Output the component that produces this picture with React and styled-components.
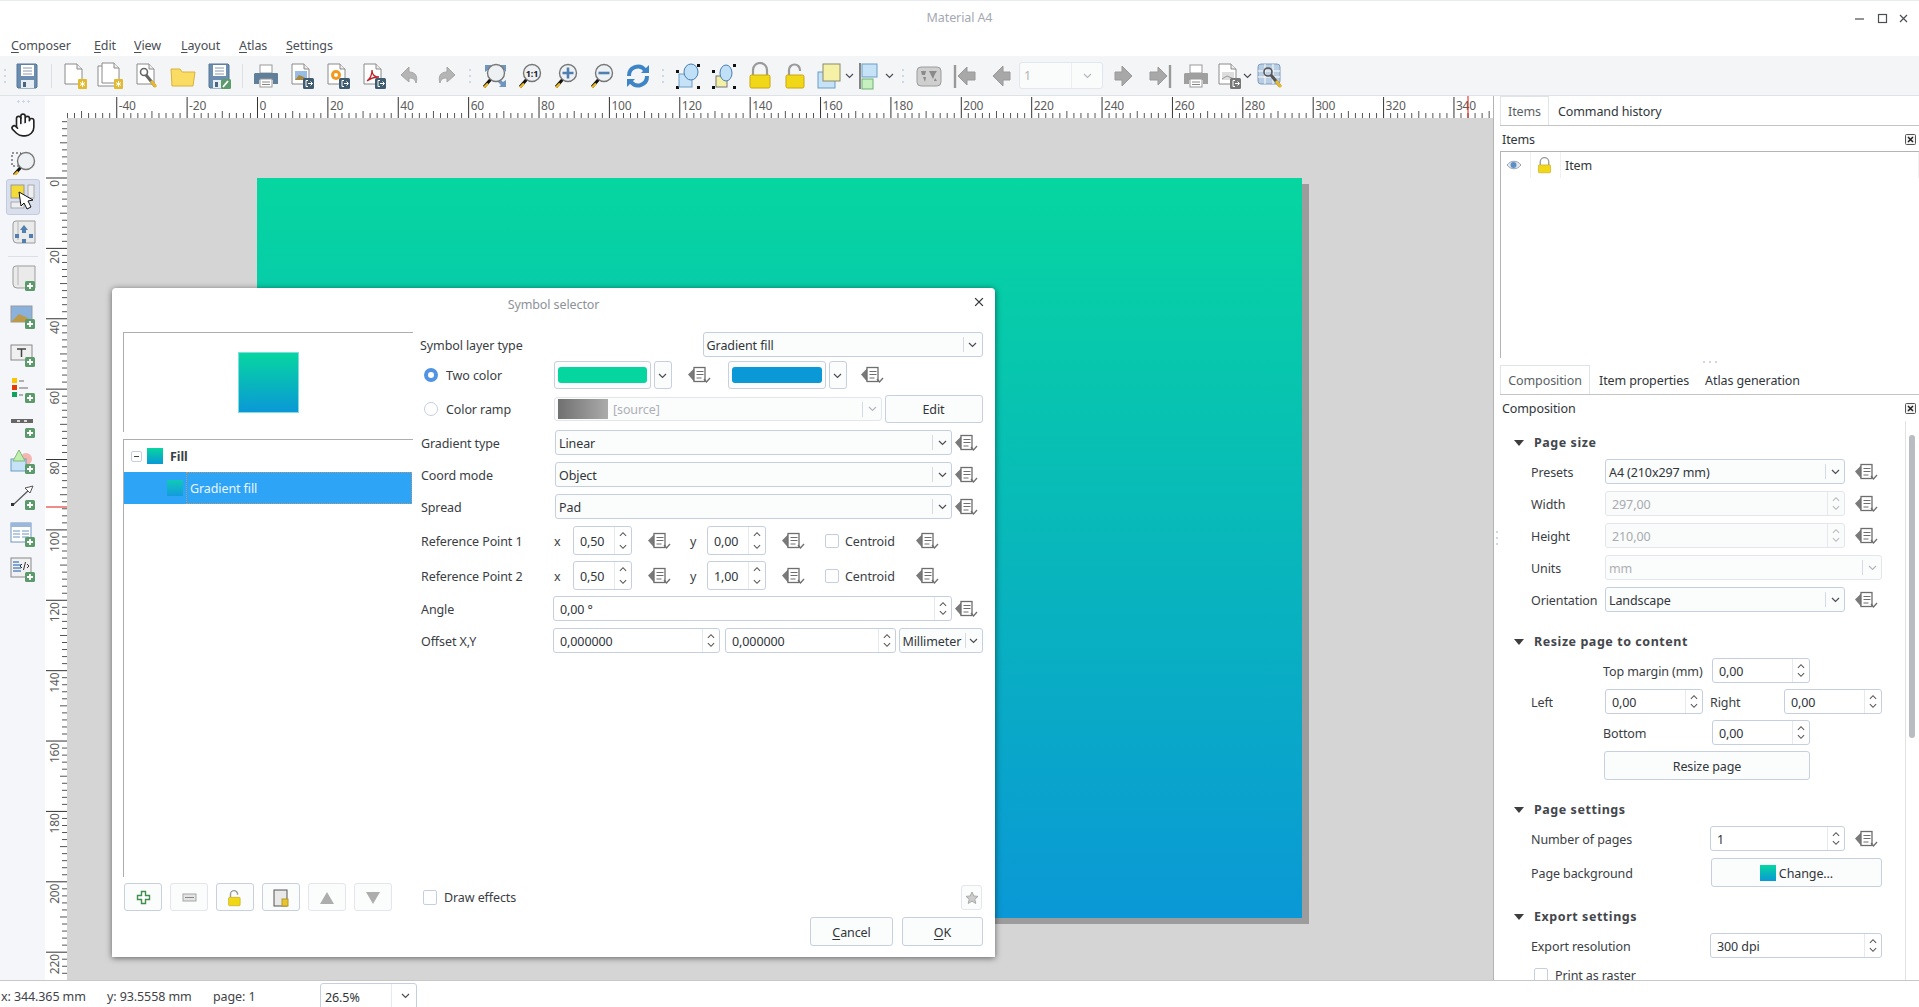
import React from "react";
import styled, { createGlobalStyle } from "styled-components";
import { Hand } from "lucide-react";

const Global = createGlobalStyle`
  html, body { margin:0; padding:0; background:#fff; }
  body { font-family:"Noto Sans", sans-serif; font-size:12.5px; letter-spacing:-0.1px; color:#31363b; }
`;

const Window = styled.div`
  position:relative;
  width:1919px;
  height:1007px;
  overflow:hidden;
  display:flex;
  flex-direction:column;
  background:#fff;
`;

const TitleBar = styled.div`
  height:34px;
  flex:none;
  border-top:1px solid #e8ebf0;
  display:flex;
  align-items:center;
  justify-content:flex-end;
  position:relative;
  padding-right:11px;
  gap:10px;
`;
const TitleText = styled.div`
  position:absolute;
  left:0;
  right:0;
  top:8px;
  text-align:center;
  color:#a5a9b4;
`;

const MenuBar = styled.div`
  height:21px;
  flex:none;
  display:flex;
  align-items:center;
  padding-left:11px;
  background:#fff;
`;
const MenuItem = styled.span`
  width:${(p) => p.$w}px;
  color:#4a4e55;
  u { text-underline-offset:2px; }
`;

const MainBar = styled.div`
  height:40px;
  flex:none;
  box-sizing:border-box;
  background:#f4f5f7;
  border-bottom:1px solid #dfe2e7;
  display:flex;
  align-items:center;
`;
const ToolBtn = styled.div`
  width:${(p) => p.$w || 36}px;
  flex:none;
  display:flex;
  align-items:center;
  justify-content:center;
`;
const Sep = styled.div`
  width:${(p) => p.$w}px;
  height:24px;
  flex:none;
  display:flex;
  justify-content:center;
  &::before { content:""; width:1px; background:#dcdfe4; }
`;
const Spacer = styled.div`
  width:${(p) => p.$w}px;
  flex:none;
`;
const Grip = styled.div`
  width:${(p) => p.$w}px;
  flex:none;
  display:flex;
  justify-content:center;
  &::before { content:""; width:2px; height:14px;
    background:repeating-linear-gradient(#cfd6e6 0 2px, transparent 2px 6px); }
`;
const PageCombo = styled.div`
  width:84px;
  height:27px;
  flex:none;
  box-sizing:border-box;
  border:1px solid #e2e6ee;
  border-radius:3px;
  background:#fafbfb;
  display:flex;
  align-items:center;
  color:#b3b5b8;
`;
const PageValue = styled.div`
  flex:1;
  padding-left:4px;
`;
const PageArrow = styled.div`
  width:30px;
  height:100%;
  border-left:1px solid #eceef2;
  display:flex;
  align-items:center;
  justify-content:center;
`;

const Body = styled.div`
  flex:1;
  min-height:0;
  display:flex;
`;
const LeftBar = styled.div`
  width:45px;
  flex:none;
  background:#f4f6fa;
  display:flex;
  flex-direction:column;
  align-items:center;
  padding-top:1px;
`;
const LeftGrip = styled.div`
  height:10px;
  width:14px;
  flex:none;
  background:radial-gradient(circle, #cfd6e6 1px, transparent 1.2px) 0 2px / 5px 5px repeat-x;
`;
const LeftBtn = styled.div`
  width:34px;
  height:${(p) => p.$h}px;
  flex:none;
  box-sizing:border-box;
  display:flex;
  align-items:center;
  justify-content:center;
  border-radius:3px;
  ${(p) => p.$active && "background:#d9dfec; border:1px solid #c3cbde;"}
`;
const LeftSep = styled.div`
  width:30px;
  height:1px;
  background:#dcdfe6;
  margin:6px 0 3px;
  flex:none;
`;

const Workspace = styled.div`
  width:1448px;
  flex:none;
  display:flex;
  flex-direction:column;
  min-height:0;
`;
const RulerRow = styled.div`
  height:22px;
  flex:none;
  display:flex;
  background:#fff;
`;
const Corner = styled.div`
  width:22px;
  flex:none;
`;
const CanvasRow = styled.div`
  flex:1;
  min-height:0;
  display:flex;
`;
const Canvas = styled.div`
  flex:1;
  background:#d5d5d5;
  overflow:hidden;
  padding:60px 0 0 190px;
`;
const Page = styled.div`
  width:1045px;
  height:740px;
  background:linear-gradient(#06d6a0, #0a98d6);
  box-shadow:7px 6px 0 #9c9c9c;
`;
const RulerSvg = styled.svg`
  display:block;
  flex:none;
  font-family:"Noto Sans", sans-serif;
  font-size:12px;
  letter-spacing:-0.2px;
  fill:#5d5d5d;
`;

const RightPanel = styled.div`
  width:426px;
  flex:none;
  box-sizing:border-box;
  border-left:1px solid #b4b4b4;
  padding-left:6px;
  display:flex;
  flex-direction:column;
  min-height:0;
`;
const TabRow = styled.div`
  height:30px;
  flex:none;
  box-sizing:border-box;
  display:flex;
  border-bottom:1px solid #c4c4c4;
`;
const Tab = styled.div`
  height:29px;
  box-sizing:border-box;
  padding:2px 8px 0;
  display:flex;
  align-items:center;
  justify-content:center;
  ${(p) => p.$w && `width:${p.$w}px; margin-right:1px;`}
  ${(p) => p.$active && "border:1px solid #dfe3ea; border-bottom:none; color:#5a5f66; padding-top:0;"}
`;
const DockHead = styled.div`
  height:${(p) => p.$h}px;
  flex:none;
  box-sizing:border-box;
  display:flex;
  align-items:center;
  justify-content:space-between;
  padding:${(p) => p.$pt || 0}px 3px 0 2px;
`;
const ItemList = styled.div`
  height:207px;
  flex:none;
  box-sizing:border-box;
  border-top:1px solid #b4b4b4;
  border-left:1px solid #b4b4b4;
`;
const ItemRow = styled.div`
  height:26px;
  display:flex;
`;
const ItemCell = styled.div`
  width:${(p) => p.$w}px;
  flex:${(p) => (p.$w ? "none" : 1)};
  box-sizing:border-box;
  display:flex;
  align-items:center;
  justify-content:${(p) => (p.$w ? "center" : "flex-start")};
  padding:0 ${(p) => p.$pr || 0}px 0 ${(p) => (p.$w ? 0 : 4)}px;
  border-right:1px solid #f0f0f0;
`;
const Splitter = styled.div`
  height:7px;
  flex:none;
  display:flex;
  justify-content:center;
  align-items:center;
  &::before { content:""; width:14px; height:2px;
    background:repeating-linear-gradient(90deg,#cfd6e6 0 2px, transparent 2px 6px); }
`;
const ScrollWrap = styled.div`
  flex:1;
  min-height:0;
  display:flex;
  overflow:hidden;
`;
const ScrollBody = styled.div`
  width:405px;
  flex:none;
  padding-top:11px;
`;
const ScrollTrack = styled.div`
  width:14px;
  flex:none;
  box-sizing:border-box;
  border-left:1px solid #e2e2e2;
  padding:14px 0 0 3px;
`;
const ScrollThumb = styled.div`
  width:6px;
  height:303px;
  border-radius:3px;
  background:#b9bcc2;
`;
const DragDots = styled.div`
  position:absolute;
  left:1496px;
  top:531px;
  width:2px;
  height:14px;
  background:repeating-linear-gradient(#cfd6e6 0 2px, transparent 2px 6px);
`;

const Section = styled.div`
  height:20px;
  display:flex;
  align-items:center;
  padding-left:14px;
  margin-bottom:${(p) => p.$mb}px;
  font-weight:700;
  letter-spacing:0.55px;
  color:#43464c;
`;
const Tri = styled.span`
  width:0;
  height:0;
  margin:2px 10px 0 0;
  border-left:5px solid transparent;
  border-right:5px solid transparent;
  border-top:6px solid #3d3d3d;
`;
const Row = styled.div`
  height:${(p) => p.$h || 25}px;
  flex:none;
  display:flex;
  align-items:center;
  margin-bottom:${(p) => p.$mb || 0}px;
  margin-left:${(p) => p.$ml || 0}px;
`;
const Lbl = styled.div`
  width:${(p) => p.$w}px;
  flex:none;
  margin-left:${(p) => p.$ml || 0}px;
  padding-top:1px;
  white-space:nowrap;
  color:${(p) => p.$c || "#3a3e44"};
`;

const ComboBox = styled.div`
  width:${(p) => p.$w}px;
  height:${(p) => p.$h || 25}px;
  flex:none;
  box-sizing:border-box;
  margin-left:${(p) => p.$ml || 0}px;
  border:1px solid ${(p) => (p.$off ? "#e3e6ec" : "#c6cfe0")};
  border-radius:3px;
  background:#fbfcfc;
  display:flex;
  align-items:center;
  color:${(p) => (p.$off ? "#aeb0b4" : "#31363b")};
`;
const ComboText = styled.div`
  flex:1;
  min-width:0;
  padding:1px 0 0 3px;
  display:flex;
  align-items:center;
  gap:5px;
  white-space:nowrap;
`;
const ComboArrow = styled.div`
  width:${(p) => p.$w || 18}px;
  height:15px;
  flex:none;
  border-left:1px solid #d5dae3;
  display:flex;
  align-items:center;
  justify-content:center;
`;
const RampSwatch = styled.span`
  width:50px;
  height:20px;
  margin-top:-1px;
  background:linear-gradient(90deg,#707070,#ababab);
`;

const SpinBox = styled.div`
  width:${(p) => p.$w}px;
  height:${(p) => p.$h || 25}px;
  flex:none;
  box-sizing:border-box;
  margin-left:${(p) => p.$ml || 0}px;
  border:1px solid ${(p) => (p.$off ? "#e3e6ec" : "#c6cfe0")};
  border-radius:3px;
  background:${(p) => (p.$off ? "#fafbfb" : "#fff")};
  display:flex;
  align-items:center;
  color:${(p) => (p.$off ? "#a8abaf" : "#31363b")};
`;
const SpinText = styled.div`
  flex:1;
  padding:1px 0 0 ${(p) => p.$pl || 6}px;
  white-space:nowrap;
`;
const Stepper = styled.div`
  width:17px;
  height:100%;
  flex:none;
  box-sizing:border-box;
  padding:4px 0;
  border-left:1px solid #e6e9ef;
  display:flex;
  flex-direction:column;
  align-items:center;
  justify-content:space-between;
`;

const Btn = styled.div`
  width:${(p) => p.$w}px;
  height:${(p) => p.$h || 29}px;
  flex:none;
  box-sizing:border-box;
  margin-left:${(p) => p.$ml || 0}px;
  padding-top:1px;
  border:1px solid ${(p) => (p.$off ? "#e3e6ec" : "#c8d0e0")};
  border-radius:3px;
  background:#fbfcfc;
  display:flex;
  align-items:center;
  justify-content:center;
  gap:3px;
  u { text-underline-offset:2px; }
`;
const ColorBtn = styled(Btn)`
  padding:0 3px;
`;
const ColorFill = styled.div`
  width:100%;
  height:16px;
  border-radius:3px;
  background:${(p) => p.$c};
`;
const ArrowBtn = styled(Btn)`
  width:18px;
`;
const Check = styled.span`
  width:14px;
  height:14px;
  flex:none;
  box-sizing:border-box;
  display:block;
  margin-left:${(p) => p.$ml || 0}px;
  border:1px solid #c6cfe0;
  border-radius:2px;
  background:#fff;
`;
const Radio = styled.span`
  width:14px;
  height:14px;
  flex:none;
  box-sizing:border-box;
  display:block;
  margin-left:4px;
  border-radius:50%;
  ${(p) => (p.$on
    ? "border:4px solid #5294e2; background:#fff;"
    : "border:1px solid #c6cfe0; background:#fff;")}
`;
const Swatch = styled.span`
  width:16px;
  height:16px;
  flex:none;
  display:block;
  opacity:${(p) => p.$o || 1};
  background:linear-gradient(#06d6a0, #0a98d6);
`;

const Dialog = styled.div`
  position:absolute;
  left:112px;
  top:288px;
  width:883px;
  height:669px;
  background:#fff;
  border-radius:4px 4px 0 0;
  box-shadow:0 1px 6px rgba(0,0,0,0.55);
  display:flex;
  flex-direction:column;
`;
const DialogHead = styled.div`
  height:32px;
  margin-bottom:12px;
  flex:none;
  position:relative;
  display:flex;
  align-items:center;
  justify-content:center;
  color:#8e929a;
`;
const DialogClose = styled.div`
  position:absolute;
  right:11px;
  top:9px;
  display:flex;
`;
const DialogMain = styled.div`
  height:545px;
  flex:none;
  display:flex;
`;
const DialogLeft = styled.div`
  width:290px;
  margin-left:11px;
  flex:none;
  display:flex;
  flex-direction:column;
`;
const Preview = styled.div`
  height:100px;
  flex:none;
  box-sizing:border-box;
  border-top:1px solid #aeaeae;
  border-left:1px solid #aeaeae;
  display:flex;
  align-items:center;
  justify-content:center;
  margin-bottom:7px;
`;
const PreviewSwatch = styled.div`
  width:61px;
  height:61px;
  box-sizing:border-box;
  margin-top:-1px;
  border:1px solid #7fdde0;
  background:linear-gradient(#06d6a0, #0a98d6);
`;
const Tree = styled.div`
  flex:1;
  box-sizing:border-box;
  border-top:1px solid #aeaeae;
  border-left:1px solid #aeaeae;
`;
const TreeRow = styled.div`
  height:${(p) => p.$h}px;
  display:flex;
  align-items:center;
  ${(p) => p.$sel && "background:#2ea4f7; color:#eaf5ff; margin-right:1px;"}
`;
const Expander = styled.span`
  width:11px;
  height:11px;
  box-sizing:border-box;
  margin:0 5px 0 7px;
  border:1px solid #c6cfe0;
  border-radius:2px;
  display:flex;
  align-items:center;
  justify-content:center;
  &::before { content:""; width:5px; height:1px; background:#444; }
`;
const TreeFill = styled.span`
  margin-left:7px;
  padding-top:1px;
  font-weight:700;
  color:#3b3f45;
`;
const TreeSel = styled.span`
  margin-left:3px;
  flex:1;
  height:100%;
  box-sizing:border-box;
  padding:1px 0 0 3px;
  display:flex;
  align-items:center;
  border:1px dotted #b49a7a;
`;
const SubSwatchGap = styled.span`
  width:43px;
  flex:none;
`;
const DialogForm = styled.div`
  flex:1;
  padding-left:7px;
  display:flex;
  flex-direction:column;
`;
const BottomRow = styled.div`
  height:28px;
  margin-top:6px;
  flex:none;
  display:flex;
  align-items:center;
  gap:8px;
  padding:0 13px 0 12px;
`;
const ToolBox = styled(Btn)`
  height:28px;
`;
const DrawLabel = styled.div`
  color:#3a3e44;
  margin-left:-1px;
`;
const DrawCheck = styled(Check)`
  margin-left:23px;
  height:15px;
`;
const FavBtn = styled(Btn)`
  margin-left:auto;
  height:25px;
`;
const Footer = styled.div`
  margin-top:6px;
  display:flex;
  justify-content:flex-end;
  gap:9px;
  padding-right:12px;
`;

const StatusBar = styled.div`
  height:27px;
  flex:none;
  box-sizing:border-box;
  border-top:1px solid #c8c8c8;
  display:flex;
  align-items:flex-start;
  padding:2px 0 0 1px;
  overflow:hidden;
`;
const StatusText = styled.div`
  width:${(p) => p.$w}px;
  flex:none;
  padding-top:5px;
  white-space:nowrap;
  color:#3f4349;
`;
const ZoomCombo = styled.div`
  width:97px;
  height:32px;
  margin-left:1px;
  flex:none;
  box-sizing:border-box;
  border:1px solid #c6cfe0;
  border-radius:3px;
  display:flex;
`;
const ZoomValue = styled.div`
  width:66px;
  padding:5px 0 0 4px;
`;
const ZoomArrow = styled.div`
  flex:1;
  border-left:1px solid #e6e9ef;
  padding:9px 0 0 9px;
`;

const Svg = styled.svg`
  display:block;
  flex:none;
`;

const Chev = ({ up, c = "#4a4e55", w = 9 }) => (
  <Svg width={w} height={6} viewBox="0 0 9 6">
    <polyline points={up ? "1,5 4.5,1.5 8,5" : "1,1 4.5,4.5 8,1"} fill="none" stroke={c} strokeWidth="1.2" />
  </Svg>
);

const DD = ({ ml = 0 }) => (
  <Svg width={24} height={20} viewBox="0 0 24 20" style={{ marginLeft: ml }}>
    <path d="M0 9.5l6-6v13z" fill="#7a7a7a" />
    <rect x="6" y="2.5" width="11" height="14" fill="#fff" stroke="#6e6e6e" strokeWidth="1.3" />
    <path d="M8.5 6.5h7M8.5 9.5h7M8.5 13h5" stroke="#6e6e6e" strokeWidth="1.2" />
    <polyline points="16,14 18.5,17 22,13" fill="none" stroke="#6e6e6e" strokeWidth="1.3" />
  </Svg>
);

const Badge = () => (
  <g>
    <rect x="16" y="17" width="10" height="10" rx="1.5" fill="#5c9a6b" />
    <path d="M21 19v6M18 22h6" stroke="#fff" strokeWidth="1.8" />
  </g>
);
const Doc = ({ x = 0, y = 0 }) => (
  <g transform={`translate(${x} ${y})`}>
    <path d="M4 2h12l5 5v15H4z" fill="#fff" stroke="#8a8a8a" />
    <path d="M16 2v5h5" fill="#eee" stroke="#8a8a8a" />
  </g>
);
const ExportBadge = ({ c = "#3f5b70" }) => (
  <g>
    <rect x="15" y="16" width="11" height="11" rx="1.5" fill={c} />
    <path d="M18 18.5v6h2M20 18.5h-2M20 21.5h4M22.5 19.5l2 2-2 2" fill="none" stroke="#fff" strokeWidth="1" />
  </g>
);
const YellowStar = () => (
  <g>
    <rect x="17" y="17" width="9" height="10" rx="1" fill="#e2b92f" />
    <path d="M21.5 19v6M19 20.5l5 3M24 20.5l-5 3" stroke="#fff" strokeWidth="1" />
  </g>
);
const Glass = ({ children }) => (
  <g>
    <path d="M11 17L4 25" stroke="#111" strokeWidth="3" />
    <path d="M8 21.5L4 25.5" stroke="#eeb92a" strokeWidth="2.4" />
    <circle cx="16" cy="11" r="8.5" fill="#eef1f4" stroke="#777" strokeWidth="1.4" />
    {children}
  </g>
);
const Floppy = () => (
  <g>
    <path d="M4 2h19l1 1v22l-1 1H5l-1-1z" fill="#6b8db0" stroke="#547696" />
    <rect x="8" y="3" width="13" height="11" fill="#fff" />
    <path d="M10 6h9M10 9h9M10 12h9" stroke="#8a9bac" />
    <rect x="8" y="18" width="13" height="8" fill="#e7edf2" />
    <rect x="10" y="20" width="3" height="5" fill="#4a6580" />
  </g>
);
const Printer = ({ c = "#5f7f9b" }) => (
  <g>
    <rect x="8" y="3" width="12" height="8" fill="#fff" stroke="#999" />
    <path d="M3 11h22a1 1 0 0 1 1 1v10h-5v-4H7v4H2V12z" fill={c} />
    <rect x="8" y="17" width="12" height="8" fill="#fff" stroke="#999" />
    <path d="M10 20h8M10 22.5h8" stroke="#888" />
  </g>
);
const Lock = ({ open }) => (
  <g>
    <path d={open ? "M7 13V8a5.5 5.5 0 0 1 11 0v1" : "M7 13V8a7 7 0 0 1 14 0v5"} fill="none" stroke="#9a9a9a" strokeWidth="2.2" />
    <rect x="4" y="13" width={open ? 18 : 20} height="13" rx="1.5" fill="#f0d818" stroke="#c9a615" />
  </g>
);
const SelectDots = () => (
  <path d="M2 8h3v3H2zM23 2h3v3h-3zM2 24h3v3H2zM23 24h3v3h-3z" fill="#111" />
);
const GrayArrow = ({ d }) => <path d={d} fill="#a8a8a8" stroke="#999" />;
const Paper = () => (
  <g>
    <path d="M8 2h18v22H8a4 4 0 0 1-4-4V5a3 3 0 0 1 3-3z" fill="#eaeaea" stroke="#9b9b9b" />
    <path d="M9 3v18" stroke="#b5b5b5" />
  </g>
);

const icons = {
  save: <Floppy />,
  newDoc: <g><Doc /><YellowStar /></g>,
  dup: <g><Doc x={-3} y={2} /><Doc x={1} y={-1} /><YellowStar /></g>,
  manager: (
    <g>
      <Doc />
      <circle cx="11" cy="10" r="3.5" fill="none" stroke="#666" strokeWidth="1.6" />
      <path d="M13 13l9 11" stroke="#666" strokeWidth="3" />
      <path d="M18 19l5 6" stroke="#e7b92d" strokeWidth="3" />
    </g>
  ),
  folder: <path d="M2 7h9l2 3h13l-2 14H3z" fill="#fbdc62" stroke="#d8b23c" />,
  saveAs: (
    <g>
      <Floppy />
      <rect x="16" y="17" width="10" height="10" rx="1.5" fill="#5c9a6b" />
      <path d="M18 25l5-6" stroke="#fff" strokeWidth="1.8" />
    </g>
  ),
  print: <Printer />,
  exportImg: (
    <g>
      <Doc />
      <rect x="7" y="9" width="12" height="9" fill="#97bde6" />
      <path d="M7 18l4-5 5 2 3 3z" fill="#a8883e" />
      <ExportBadge />
    </g>
  ),
  exportSvg: (
    <g>
      <Doc />
      <circle cx="12" cy="13" r="5" fill="#f39a1e" />
      <circle cx="12" cy="13" r="2" fill="#fff" />
      <ExportBadge />
    </g>
  ),
  exportPdf: (
    <g>
      <Doc />
      <path d="M7 19c4-3 5-7 5-11 0 5 3 7 7 7-4 0-8 1-12 4z" fill="none" stroke="#c0272d" strokeWidth="1.3" />
      <ExportBadge />
    </g>
  ),
  undo: <path d="M13 5L5 13l8 7v-4c4 0 6 1 7 5 2-6 0-11-7-11z" fill="#b5b5b5" stroke="#a5a5a5" />,
  redo: <path d="M15 5l8 8-8 7v-4c-4 0-6 1-7 5-2-6 0-11 7-11z" fill="#b5b5b5" stroke="#a5a5a5" />,
  zoomFull: (
    <g>
      <path d="M5 3h7l-2 2 3 3-2 3-3-3-3 2zM26 3v7l-2-2-3 3-3-2 3-3-2-3zM26 25h-7l2-2-3-3 2-3 3 3 3-2z" fill="#6f96c0" />
      <Glass />
    </g>
  ),
  zoom1: (
    <Glass>
      <text x="16" y="14.5" textAnchor="middle" fontSize="9" fill="#222" fontFamily="Noto Sans" fontWeight="700">1:1</text>
    </Glass>
  ),
  zoomIn: <Glass><path d="M16 5.5v11M10.5 11h11" stroke="#4f7fb1" strokeWidth="2.6" /></Glass>,
  zoomOut: <Glass><path d="M10.5 11h11" stroke="#4f7fb1" strokeWidth="2.6" /></Glass>,
  refresh: (
    <g fill="none" stroke="#3d85c6" strokeWidth="4">
      <path d="M5 14a9 9 0 0 1 16-6" />
      <path d="M23 14a9 9 0 0 1-16 6" />
      <path d="M17 11h8V3z" fill="#3d85c6" stroke="none" />
      <path d="M11 17H3v8z" fill="#3d85c6" stroke="none" />
    </g>
  ),
  group: (
    <g>
      <SelectDots />
      <rect x="5" y="12" width="13" height="13" fill="#c5e2f6" stroke="#6a9dc5" />
      <ellipse cx="17" cy="10" rx="7" ry="8" fill="#bfe0f7" stroke="#4a7fae" />
    </g>
  ),
  ungroup: (
    <g>
      <SelectDots />
      <rect x="6" y="14" width="11" height="11" fill="#f4f0a5" stroke="#777" />
      <ellipse cx="16" cy="11" rx="6" ry="8" fill="#bfe0f7" stroke="#4a7fae" />
    </g>
  ),
  lock: <Lock />,
  unlock: <Lock open />,
  raise: (
    <g>
      <rect x="1" y="10" width="17" height="16" fill="#c5e2f6" stroke="#6a9dc5" />
      <rect x="6" y="2" width="17" height="17" fill="#f5f2a8" stroke="#8a8a6a" />
    </g>
  ),
  align: (
    <g>
      <path d="M3 1v26" stroke="#555" strokeWidth="1.4" />
      <rect x="5" y="2" width="15" height="13" fill="#c5e2f6" stroke="#6a9dc5" />
      <rect x="5" y="17" width="11" height="10" fill="#c7f0bf" stroke="#6fb07a" />
    </g>
  ),
  atlas: (
    <g>
      <rect x="2" y="5" width="24" height="19" rx="4" fill="#cfcfcf" stroke="#9c9c9c" />
      <path d="M6 9h5l-1 4H7zM14 9h8l-2 3-2 5-2-4zM8 15h3l-1 5zM20 16l2 3h-3z" fill="#8a8a8a" />
    </g>
  ),
  first: <g><path d="M4 3v23" stroke="#999" strokeWidth="2.4" /><GrayArrow d="M7 14l9-9v5h8v8h-8v5z" /></g>,
  prev: <GrayArrow d="M6 14l10-10v6h7v8h-7v6z" />,
  next: <GrayArrow d="M22 14L12 4v6H5v8h7v6z" />,
  last: <g><path d="M24 3v23" stroke="#999" strokeWidth="2.4" /><GrayArrow d="M21 14l-9-9v5H4v8h8v5z" /></g>,
  printOff: <Printer c="#9f9f9f" />,
  exportOff: (
    <g>
      <Doc />
      <rect x="7" y="10" width="12" height="8" fill="#ddd" />
      <path d="M7 17l5-3 7 3" fill="none" stroke="#999" />
      <ExportBadge c="#777" />
    </g>
  ),
  settings: (
    <g>
      <rect x="2" y="2" width="22" height="20" rx="3" fill="#b9cde3" stroke="#7f9cba" />
      <path d="M2 9h22M2 15h22M9 2v20M17 2v20" stroke="#fff" />
      <circle cx="12" cy="10" r="4" fill="none" stroke="#555" strokeWidth="1.6" />
      <path d="M15 13l9 11" stroke="#555" strokeWidth="3" />
      <path d="M20 19l5 6" stroke="#e7b92d" strokeWidth="3" />
    </g>
  ),
  zoomTool: (
    <g>
      <rect x="3" y="6" width="9" height="13" fill="none" stroke="#333" strokeDasharray="2 2" />
      <g transform="translate(1 3)"><Glass /></g>
    </g>
  ),
  select: (
    <g>
      <rect x="2" y="2" width="13" height="13" fill="#f3dc3a" stroke="#999" />
      <rect x="19" y="2" width="6" height="13" fill="#eceef1" stroke="#aaa" />
      <rect x="2" y="19" width="13" height="6" fill="#eceef1" stroke="#aaa" />
      <path d="M10 9l2 14 3-3 3 6 4-2-3-6 5-1z" fill="#fff" stroke="#111" />
    </g>
  ),
  moveContent: (
    <g>
      <Paper />
      <path d="M15 6l4 5h-2v3h-4v-3h-2zM6 15h4v4H6zM20 15h4v4h-4zM13 20h4v4h-4z" fill="#4f7fb1" />
    </g>
  ),
  addMap: <g><Paper /><Badge /></g>,
  addImage: (
    <g>
      <rect x="2" y="4" width="21" height="16" fill="#8ab2dd" stroke="#999" />
      <path d="M2 20l8-8 9 4 4 4z" fill="#bc9a4a" />
      <Badge />
    </g>
  ),
  addLabel: (
    <g>
      <rect x="2" y="5" width="21" height="15" fill="#f0f0f0" stroke="#888" />
      <path d="M8 9h9M12.5 9v8" stroke="#444" strokeWidth="1.5" />
      <Badge />
    </g>
  ),
  addLegend: (
    <g>
      <rect x="3" y="2" width="5" height="5" fill="#ffc400" />
      <rect x="3" y="9" width="5" height="5" fill="#e63a00" />
      <rect x="3" y="16" width="5" height="5" fill="#0fa35b" />
      <path d="M10 5h5M10 12h9M10 19h4" stroke="#999" strokeWidth="1.5" />
      <Badge />
    </g>
  ),
  addScale: (
    <g>
      <rect x="2" y="8" width="22" height="4" fill="#666" />
      <path d="M8 10h3M15 10h3" stroke="#fff" strokeWidth="1.4" />
      <Badge />
    </g>
  ),
  addShape: (
    <g>
      <circle cx="17" cy="12" r="6" fill="#f4b6b0" />
      <rect x="2" y="12" width="15" height="12" fill="#c5e2f6" stroke="#6a9dc5" />
      <path d="M10 3l6 11H4z" fill="#bff0ae" stroke="#85b77a" />
      <Badge />
    </g>
  ),
  addArrow: (
    <g>
      <path d="M4 22L21 6" stroke="#555" strokeWidth="1.2" />
      <path d="M24 3l-8 2 5 5z" fill="#fff" stroke="#555" />
      <rect x="2" y="20" width="3" height="3" fill="#333" />
      <Badge />
    </g>
  ),
  addTable: (
    <g>
      <rect x="2" y="3" width="20" height="19" fill="#fff" stroke="#6f96c0" />
      <rect x="2" y="3" width="20" height="4" fill="#9ab9da" />
      <path d="M4 11h7M13 11h7M4 14h7M13 14h7M4 17h7M13 17h7" stroke="#6f96c0" />
      <Badge />
    </g>
  ),
  addHtml: (
    <g>
      <rect x="2" y="3" width="20" height="19" fill="#f1f1f1" stroke="#888" />
      <path d="M4 7h6M4 10h8M4 13h8M4 16h8" stroke="#5a8ac4" strokeWidth="1.4" />
      <path d="M13 9l-2 2 2 2M18 9l2 2-2 2M16.5 7l-2 8" fill="none" stroke="#333" />
      <Badge />
    </g>
  ),
};

const Icon = ({ name, s = 28 }) => (
  <Svg width={s} height={s} viewBox="0 0 28 28">{icons[name]}</Svg>
);

const TB = ({ name, w, s, chev }) => (
  <ToolBtn $w={w}>
    <Icon name={name} s={s} />
    {chev && <Chev />}
  </ToolBtn>
);

const Combo = ({ w, h, ml, off, children, aw }) => (
  <ComboBox $w={w} $h={h} $ml={ml} $off={off}>
    <ComboText>{children}</ComboText>
    <ComboArrow $w={aw}>
      <Chev c={off ? "#b4b7bd" : "#4a4e55"} />
    </ComboArrow>
  </ComboBox>
);

const Spin = ({ w, h, ml, off, pl, children }) => (
  <SpinBox $w={w} $h={h} $ml={ml} $off={off}>
    <SpinText $pl={pl}>{children}</SpinText>
    <Stepper>
      <Chev up w={8} c={off ? "#b4b7bd" : "#555"} />
      <Chev w={8} c={off ? "#b4b7bd" : "#555"} />
    </Stepper>
  </SpinBox>
);

const SmallX = ({ s = 9, c = "#4a4e55" }) => (
  <Svg width={s} height={s} viewBox="0 0 9 9">
    <path d="M1 1l7 7M8 1L1 8" stroke={c} strokeWidth="1.2" />
  </Svg>
);

const DockClose = () => (
  <Svg width={11} height={11} viewBox="0 0 11 11">
    <rect x=".5" y=".5" width="10" height="10" rx="1" fill="#f2f2f2" stroke="#555" />
    <path d="M3 3l5 5M8 3L3 8" stroke="#222" strokeWidth="1.5" />
  </Svg>
);

const PX_PER_MM = 3.519;

const HRuler = () => {
  const ticks = [];
  for (let mm = -54; mm <= 350; mm += 2) {
    const x = 190.5 + mm * PX_PER_MM;
    if (x > 1426) break;
    const major = mm % 20 === 0;
    const mid = mm % 10 === 0;
    ticks.push(
      <g key={mm}>
        <line x1={x} x2={x} y1={major ? 1 : mid ? 15 : 17} y2={22} stroke={major ? "#333" : "#555"} />
        {major && <text x={x + 2} y={14}>{mm}</text>}
      </g>
    );
  }
  return (
    <RulerSvg width={1426} height={22}>
      {ticks}
      <line x1={1401} x2={1401} y1={0} y2={22} stroke="#e01818" />
    </RulerSvg>
  );
};

const VRuler = () => {
  const ticks = [];
  for (let mm = -16; mm <= 226; mm += 2) {
    const y = 60 + mm * PX_PER_MM;
    const major = mm % 20 === 0;
    const mid = mm % 10 === 0;
    ticks.push(
      <g key={mm}>
        <line x1={major ? 1 : mid ? 15 : 17} x2={22} y1={y} y2={y} stroke={major ? "#333" : "#555"} />
        {major && (
          <text transform={`translate(14 ${y + 2}) rotate(-90)`} textAnchor="end">{mm}</text>
        )}
      </g>
    );
  }
  return (
    <RulerSvg width={22} height={862}>
      {ticks}
      <line x1={1} x2={22} y1={389} y2={389} stroke="#e01818" />
    </RulerSvg>
  );
};

const App = () => (
  <Window>
    <Global />
    <TitleBar>
      <TitleText>Material A4</TitleText>
      <Svg width={13} height={9} viewBox="0 0 13 9"><path d="M2 5h9" stroke="#4a4e55" strokeWidth="1.2" /></Svg>
      <Svg width={13} height={11} viewBox="0 0 13 11"><rect x="2.5" y="1.5" width="8" height="8" fill="none" stroke="#4a4e55" strokeWidth="1.2" /></Svg>
      <SmallX />
    </TitleBar>
    <MenuBar>
      <MenuItem $w={83}><u>C</u>omposer</MenuItem>
      <MenuItem $w={40}><u>E</u>dit</MenuItem>
      <MenuItem $w={47}><u>V</u>iew</MenuItem>
      <MenuItem $w={58}><u>L</u>ayout</MenuItem>
      <MenuItem $w={47}><u>A</u>tlas</MenuItem>
      <MenuItem $w={60}><u>S</u>ettings</MenuItem>
    </MenuBar>
    <MainBar>
      <Grip $w={9} />
      <TB name="save" />
      <Sep $w={12} />
      <TB name="newDoc" />
      <TB name="dup" />
      <TB name="manager" />
      <TB name="folder" />
      <TB name="saveAs" />
      <Sep $w={11} />
      <TB name="print" />
      <TB name="exportImg" />
      <TB name="exportSvg" />
      <TB name="exportPdf" />
      <TB name="undo" />
      <TB name="redo" />
      <Grip $w={12} />
      <TB name="zoomFull" />
      <TB name="zoom1" />
      <TB name="zoomIn" />
      <TB name="zoomOut" />
      <TB name="refresh" />
      <Grip $w={14} />
      <TB name="group" />
      <TB name="ungroup" />
      <TB name="lock" />
      <TB name="unlock" />
      <TB name="raise" w={42} chev />
      <TB name="align" w={38} chev />
      <Grip $w={17} />
      <TB name="atlas" />
      <TB name="first" />
      <TB name="prev" />
      <PageCombo>
        <PageValue>1</PageValue>
        <PageArrow><Chev c="#b4b7bd" /></PageArrow>
      </PageCombo>
      <Spacer $w={3} />
      <TB name="next" />
      <TB name="last" />
      <TB name="printOff" />
      <TB name="exportOff" chev w={38} />
      <TB name="settings" />
    </MainBar>
    <Body>
      <LeftBar>
        <LeftGrip />
        <LeftBtn $h={35}><Hand size={26} fill="#fff" stroke="#222" strokeWidth={1.5} /></LeftBtn>
        <LeftBtn $h={37}><Icon name="zoomTool" /></LeftBtn>
        <LeftBtn $h={36} $active><Icon name="select" /></LeftBtn>
        <LeftBtn $h={35}><Icon name="moveContent" /></LeftBtn>
        <LeftSep />
        <LeftBtn $h={36}><Icon name="addMap" /></LeftBtn>
        <LeftBtn $h={39}><Icon name="addImage" /></LeftBtn>
        <LeftBtn $h={38}><Icon name="addLabel" /></LeftBtn>
        <LeftBtn $h={33}><Icon name="addLegend" /></LeftBtn>
        <LeftBtn $h={37}><Icon name="addScale" /></LeftBtn>
        <LeftBtn $h={35}><Icon name="addShape" /></LeftBtn>
        <LeftBtn $h={38}><Icon name="addArrow" /></LeftBtn>
        <LeftBtn $h={35}><Icon name="addTable" /></LeftBtn>
        <LeftBtn $h={35}><Icon name="addHtml" /></LeftBtn>
      </LeftBar>
      <Workspace>
        <RulerRow>
          <Corner />
          <HRuler />
        </RulerRow>
        <CanvasRow>
          <VRuler />
          <Canvas>
            <Page />
          </Canvas>
        </CanvasRow>
      </Workspace>
      <RightPanel>
        <TabRow>
          <Tab $active $w={49}>Items</Tab>
          <Tab>Command history</Tab>
        </TabRow>
        <DockHead $h={25} $pt={1}>
          <span>Items</span>
          <DockClose />
        </DockHead>
        <ItemList>
          <ItemRow>
            <ItemCell $w={30} $pr={4}>
              <Svg width={16} height={10} viewBox="0 0 16 10">
                <path d="M1 5c4-5 10-5 14 0-4 5-10 5-14 0z" fill="#e6eaf0" stroke="#9aa3ad" />
                <circle cx="7.5" cy="5" r="3" fill="#5b8fc7" />
              </Svg>
            </ItemCell>
            <ItemCell $w={30} $pr={3}><Icon name="lock" s={17} /></ItemCell>
            <ItemCell>Item</ItemCell>
          </ItemRow>
        </ItemList>
        <Splitter />
        <TabRow>
          <Tab $active $w={90}>Composition</Tab>
          <Tab>Item properties</Tab>
          <Tab>Atlas generation</Tab>
        </TabRow>
        <DockHead $h={26}>
          <span>Composition</span>
          <DockClose />
        </DockHead>
        <ScrollWrap>
          <ScrollBody>
            <Section $mb={7}><Tri />Page size</Section>
            <Row $ml={31} $mb={7}><Lbl $w={74}>Presets</Lbl><Combo w={240}>A4 (210x297 mm)</Combo><DD ml={10} /></Row>
            <Row $ml={31} $mb={7}><Lbl $w={74}>Width</Lbl><Spin w={240} off>297,00</Spin><DD ml={10} /></Row>
            <Row $ml={31} $mb={7}><Lbl $w={74}>Height</Lbl><Spin w={240} off>210,00</Spin><DD ml={10} /></Row>
            <Row $ml={31} $mb={7}><Lbl $w={74}>Units</Lbl><Combo w={277} off>mm</Combo></Row>
            <Row $ml={31} $mb={19}><Lbl $w={74}>Orientation</Lbl><Combo w={240}>Landscape</Combo><DD ml={10} /></Row>
            <Section $mb={7}><Tri />Resize page to content</Section>
            <Row $ml={31} $mb={6}><Lbl $w={109} $ml={72}>Top margin (mm)</Lbl><Spin w={98}>0,00</Spin></Row>
            <Row $ml={31} $mb={6}><Lbl $w={74}>Left</Lbl><Spin w={98}>0,00</Spin><Lbl $w={74} $ml={7}>Right</Lbl><Spin w={98}>0,00</Spin></Row>
            <Row $ml={31} $mb={6}><Lbl $w={109} $ml={72}>Bottom</Lbl><Spin w={98}>0,00</Spin></Row>
            <Row $ml={31} $h={29} $mb={19}><Btn $w={206} $ml={73}>Resize page</Btn></Row>
            <Section $mb={7}><Tri />Page settings</Section>
            <Row $ml={31} $mb={7}><Lbl $w={179}>Number of pages</Lbl><Spin w={135} pl={6}>1</Spin><DD ml={10} /></Row>
            <Row $ml={31} $h={29} $mb={19}><Lbl $w={180}>Page background</Lbl><Btn $w={171}><Swatch />Change...</Btn></Row>
            <Section $mb={7}><Tri />Export settings</Section>
            <Row $ml={31} $mb={7}><Lbl $w={179}>Export resolution</Lbl><Spin w={172} pl={6}>300 dpi</Spin></Row>
            <Row $ml={34} $h={20}><Check /><Lbl $w={100} $ml={7}>Print as raster</Lbl></Row>
          </ScrollBody>
          <ScrollTrack><ScrollThumb /></ScrollTrack>
        </ScrollWrap>
      </RightPanel>
    </Body>
    <StatusBar>
      <StatusText $w={106}>x: 344.365 mm</StatusText>
      <StatusText $w={106}>y: 93.5558 mm</StatusText>
      <StatusText $w={106}>page: 1</StatusText>
      <ZoomCombo>
        <ZoomValue>26.5%</ZoomValue>
        <ZoomArrow><Chev /></ZoomArrow>
      </ZoomCombo>
    </StatusBar>

    <DragDots />

    <Dialog>
      <DialogHead>
        Symbol selector
        <DialogClose><SmallX s={10} c="#33363b" /></DialogClose>
      </DialogHead>
      <DialogMain>
        <DialogLeft>
          <Preview><PreviewSwatch /></Preview>
          <Tree>
            <TreeRow $h={32}>
              <Expander />
              <Swatch />
              <TreeFill>Fill</TreeFill>
            </TreeRow>
            <TreeRow $h={32} $sel>
              <SubSwatchGap />
              <Swatch $o={0.75} />
              <TreeSel>Gradient fill</TreeSel>
            </TreeRow>
          </Tree>
        </DialogLeft>
        <DialogForm>
          <Row $mb={4}><Lbl $w={282.6}>Symbol layer type</Lbl><Combo w={280}>Gradient fill</Combo></Row>
          <Row $h={28} $mb={6}>
            <Radio $on />
            <Lbl $w={107.5} $ml={8}>Two color</Lbl>
            <ColorBtn $w={97} $h={28}><ColorFill $c="#05d6a0" /></ColorBtn>
            <ArrowBtn $ml={3} $w={18} $h={28}><Chev /></ArrowBtn>
            <DD ml={16} />
            <ColorBtn $w={98} $h={28} $ml={16}><ColorFill $c="#0a98d6" /></ColorBtn>
            <ArrowBtn $ml={3} $w={18} $h={28}><Chev /></ArrowBtn>
            <DD ml={14} />
          </Row>
          <Row $h={28} $mb={7}>
            <Radio />
            <Lbl $w={108} $ml={8}>Color ramp</Lbl>
            <Combo w={328} h={24} off><RampSwatch />[source]</Combo>
            <Btn $w={98} $h={28} $ml={2.5}>Edit</Btn>
          </Row>
          <Row $mb={7}><Lbl $w={134} $ml={1}>Gradient type</Lbl><Combo w={397}>Linear</Combo><DD ml={3} /></Row>
          <Row $mb={7}><Lbl $w={134} $ml={1}>Coord mode</Lbl><Combo w={397}>Object</Combo><DD ml={3} /></Row>
          <Row $mb={7}><Lbl $w={134} $ml={1}>Spread</Lbl><Combo w={397}>Pad</Combo><DD ml={3} /></Row>
          {[["Reference Point 1", "0,00"], ["Reference Point 2", "1,00"]].map(([label, y]) => (
            <Row $h={29} $mb={6} key={label}>
              <Lbl $w={133} $ml={1}>{label}</Lbl>
              <Lbl $w={19}>x</Lbl>
              <Spin w={59} h={29}>0,50</Spin>
              <DD ml={16} />
              <Lbl $w={17} $ml={18}>y</Lbl>
              <Spin w={59} h={29}>{y}</Spin>
              <DD ml={16} />
              <Check $ml={19} />
              <Lbl $w={71} $ml={6}>Centroid</Lbl>
              <DD />
            </Row>
          ))}
          <Row $mb={7}><Lbl $w={132} $ml={1}>Angle</Lbl><Spin w={399}>0,00 °</Spin><DD ml={3} /></Row>
          <Row>
            <Lbl $w={132} $ml={1}>Offset X,Y</Lbl>
            <Spin w={167}>0,000000</Spin>
            <Spin w={171} ml={5}>0,000000</Spin>
            <Combo w={84} ml={2.5} aw={16}>Millimeter</Combo>
          </Row>
        </DialogForm>
      </DialogMain>
      <BottomRow>
        <ToolBox $w={38}>
          <Svg width={15} height={15} viewBox="0 0 15 15">
            <path d="M5.5 1.5h4v4h4v4h-4v4h-4v-4h-4v-4h4z" fill="#fff" stroke="#3f8f4f" strokeWidth="1.4" />
          </Svg>
        </ToolBox>
        <ToolBox $w={38} $off>
          <Svg width={15} height={9} viewBox="0 0 15 9">
            <rect x="1" y="1" width="13" height="7" fill="#e4e4e4" stroke="#a5a5a5" />
            <path d="M3 4.5h9" stroke="#888" />
          </Svg>
        </ToolBox>
        <ToolBox $w={38}><Icon name="unlock" s={18} /></ToolBox>
        <ToolBox $w={38}>
          <Svg width={16} height={18} viewBox="0 0 16 18">
            <rect x="1" y="1" width="13" height="16" fill="#e9e9e9" stroke="#555" />
            <rect x="9" y="10" width="6" height="7" fill="#e7c52e" stroke="#b8972a" />
          </Svg>
        </ToolBox>
        <ToolBox $w={38} $off>
          <Svg width={16} height={14} viewBox="0 0 16 14"><path d="M8 1l7 12H1z" fill="#adadad" /></Svg>
        </ToolBox>
        <ToolBox $w={38} $off>
          <Svg width={16} height={14} viewBox="0 0 16 14"><path d="M8 13L1 1h14z" fill="#adadad" /></Svg>
        </ToolBox>
        <DrawCheck />
        <DrawLabel>Draw effects</DrawLabel>
        <FavBtn $w={21} $off>
          <Svg width={14} height={14} viewBox="0 0 14 14">
            <path d="M7 1l1.8 4 4.2.4-3.2 2.8 1 4.3L7 10.2 3.2 12.5l1-4.3L1 5.4 5.2 5z" fill="#ccc" stroke="#aaa" />
          </Svg>
        </FavBtn>
      </BottomRow>
      <Footer>
        <Btn $w={83}><span><u>C</u>ancel</span></Btn>
        <Btn $w={81}><span><u>O</u>K</span></Btn>
      </Footer>
    </Dialog>
  </Window>
);

export default App;
